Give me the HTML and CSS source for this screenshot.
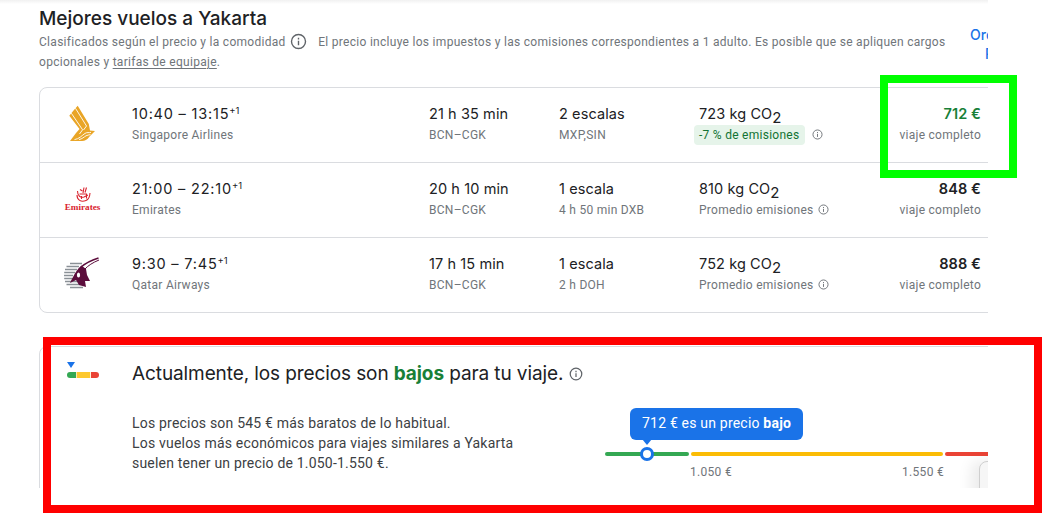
FILE: index.html
```html
<!DOCTYPE html>
<html lang="es">
<head>
  <meta charset="UTF-8" />
  <meta name="viewport" content="width=device-width, initial-scale=1" />
  <title>Mejores vuelos a Yakarta</title>
  <link rel="stylesheet" href="styles.css">
</head>
<body>
  <div class="page">
    <div class="top-shadow"></div>

    <div class="results-head">
      <div class="results-text">
        <h2>Mejores vuelos a Yakarta</h2>
        <div class="results-note">Clasificados según el precio y la comodidad
          <svg class="info info-big" viewBox="0 0 16 16"><circle cx="8" cy="8" r="6.6"/><path d="M8 7.2v4.3M8 4.4v1.6"/></svg>
          El precio incluye los impuestos y las comisiones correspondientes a 1 adulto. Es posible que se apliquen cargos
        </div>
        <div class="results-note">opcionales y <u>tarifas de equipaje</u>.</div>
      </div>
      <a class="sort-link">Ordenar<br>Por</a>
    </div>

    <div class="flights">
      <div class="flight">
        <div class="logo">
          <svg viewBox="0 0 55 50" width="55" height="50">
            <path d="M22.7 5.7 L33.8 24 L35 30.5 L40 31 L34.5 36.5 C32 40 30 41 27 41 L15 41 L21 33 L24.5 29 L14.3 15.7 L18.3 10.7z" fill="#e9a526"/>
            <g fill="none" stroke="#fff" stroke-width="0.9">
              <path d="M20.4 8.2 L31.5 26 L28.5 30"/>
              <path d="M16.3 13.2 L27.6 29.8 L24.5 34"/>
              <path d="M19.5 39.6 C24 39 27 35.5 30 33.4 C32 32 34 33 36 32.4"/>
              <path d="M24 39.6 C27 39 29 37 31 35.8 C32.5 35 34 35 35.5 34.6"/>
            </g>
          </svg>
        </div>
        <div class="col">
          <div class="main times">10:40 – 13:15<sup>+1</sup></div>
          <div class="sub">Singapore Airlines</div>
        </div>
        <div class="col">
          <div class="main">21 h 35 min</div>
          <div class="sub">BCN–CGK</div>
        </div>
        <div class="col">
          <div class="main">2 escalas</div>
          <div class="sub">MXP,SIN</div>
        </div>
        <div class="col">
          <div class="main">723 kg CO<sub>2</sub></div>
          <div class="sub"><span class="pill">-7 % de emisiones</span>
            <svg class="info info-small" viewBox="0 0 16 16"><circle cx="8" cy="8" r="6.6"/><path d="M8 7.2v4.3M8 4.4v1.6"/></svg>
          </div>
        </div>
        <div class="col price">
          <div class="main amount good">712 €</div>
          <div class="sub">viaje completo</div>
        </div>
      </div>

      <div class="flight">
        <div class="logo logo-emirates">
          <svg viewBox="0 0 24 16" width="24" height="16">
            <g fill="none" stroke="#d9232e" stroke-width="1.1">
              <path d="M13 0.5 L12 6 M15.5 0.5 L14 5.5 M6.5 4 C6.5 9 9.5 11 13 10 L17 8 M6 8 C6 13 10 15.5 15 13.5 C18 12.3 18.8 9 19 6"/>
              <path d="M8.5 7 H15.5 V11.5 M9 2.5 L11.5 4 M10.5 9 V12"/>
            </g>
          </svg>
          <span class="emirates-word">Emirates</span>
        </div>
        <div class="col">
          <div class="main times">21:00 – 22:10<sup>+1</sup></div>
          <div class="sub">Emirates</div>
        </div>
        <div class="col">
          <div class="main">20 h 10 min</div>
          <div class="sub">BCN–CGK</div>
        </div>
        <div class="col">
          <div class="main">1 escala</div>
          <div class="sub">4 h 50 min DXB</div>
        </div>
        <div class="col">
          <div class="main">810 kg CO<sub>2</sub></div>
          <div class="sub">Promedio emisiones
            <svg class="info info-small" viewBox="0 0 16 16"><circle cx="8" cy="8" r="6.6"/><path d="M8 7.2v4.3M8 4.4v1.6"/></svg>
          </div>
        </div>
        <div class="col price">
          <div class="main amount">848 €</div>
          <div class="sub">viaje completo</div>
        </div>
      </div>

      <div class="flight">
        <div class="logo">
          <svg viewBox="0 0 55 50" width="55" height="50">
            <g stroke="#8a9096" stroke-width="1.3">
              <path d="M15 13.5H27M11.5 16.5H24M10 19.5H22M9.2 22.5H20M9 25.5H18M9.2 28.5H18M10 31.5H24M11.5 34.5H28M15 37.5H28"/>
            </g>
            <path d="M26.5 15.5 C22 19 19 25 15 33 L21 30 L24 35 L31 37 L30 31 L35 31 L32 25 L31 19z" fill="#5c0d3c"/>
            <g fill="none" stroke="#5c0d3c">
              <path d="M43.5 8 C37 10 31 13 26 17" stroke-width="1.4"/>
              <path d="M44 10 C38 12.5 33 15.5 29.5 19.5" stroke-width="1"/>
            </g>
            <ellipse cx="23.5" cy="25" rx="1.6" ry="2.6" fill="#fff"/>
          </svg>
        </div>
        <div class="col">
          <div class="main times">9:30 – 7:45<sup>+1</sup></div>
          <div class="sub">Qatar Airways</div>
        </div>
        <div class="col">
          <div class="main">17 h 15 min</div>
          <div class="sub">BCN–CGK</div>
        </div>
        <div class="col">
          <div class="main">1 escala</div>
          <div class="sub">2 h DOH</div>
        </div>
        <div class="col">
          <div class="main">752 kg CO<sub>2</sub></div>
          <div class="sub">Promedio emisiones
            <svg class="info info-small" viewBox="0 0 16 16"><circle cx="8" cy="8" r="6.6"/><path d="M8 7.2v4.3M8 4.4v1.6"/></svg>
          </div>
        </div>
        <div class="col price">
          <div class="main amount">888 €</div>
          <div class="sub">viaje completo</div>
        </div>
      </div>
    </div>

    <div class="insight">
      <div class="insight-head">
        <div class="insight-icon">
          <svg viewBox="0 0 33 17" width="33" height="17">
            <path d="M0 0H8L4 6z" fill="#1a73e8"/>
            <path d="M3 10H9V16H3A3 3 0 0 1 3 10z" fill="#34a853"/>
            <rect x="9.6" y="10" width="13.6" height="6" fill="#fdc82f"/>
            <path d="M24 10H29A3 3 0 0 1 29 16H24z" fill="#ea4335"/>
          </svg>
        </div>
        <h3>Actualmente, los precios son <b>bajos</b> para tu viaje.
          <svg class="info info-head" viewBox="0 0 16 16"><circle cx="8" cy="8" r="6.6"/><path d="M8 7.2v4.3M8 4.4v1.6"/></svg>
        </h3>
      </div>
      <div class="insight-body">
        <p class="insight-text">Los precios son 545 € más baratos de lo habitual.<br>Los vuelos más económicos para viajes similares a Yakarta<br>suelen tener un precio de 1.050-1.550 €.</p>
        <div class="range">
          <div class="bubble">712 € es un precio <b>bajo</b></div>
          <div class="track">
            <span class="seg seg-low"></span>
            <span class="seg seg-mid"></span>
            <span class="seg seg-high"></span>
          </div>
          <div class="handle"></div>
          <div class="range-labels">
            <span>1.050 €</span>
            <span>1.550 €</span>
          </div>
        </div>
      </div>
      <div class="corner-widget"></div>
    </div>
  </div>

  <div class="mark mark-green"></div>
  <div class="mark mark-red"></div>
</body>
</html>
```

FILE: styles.css
```css
* {
  box-sizing: border-box;
}

body {
  margin: 0;
  background: #fff;
  font-family: Roboto, 'Liberation Sans', sans-serif;
  color: #202124;
  height: 513px;
  overflow: hidden;
}

.page {
  width: 988px;
  height: 488px;
  overflow: hidden;
  padding-left: 39px;
  position: relative;
}

.top-shadow {
  position: absolute;
  top: 0;
  left: 0;
  right: 0;
  height: 4px;
  background: linear-gradient(to bottom, #f1f1f1, #fff);
}

.results-head {
  display: flex;
  height: 87px;
  padding-top: 7px;
}

.results-text {
  width: 915px;
  flex-shrink: 0;
}

h2 {
  margin: 0 0 1px;
  font-family: Inter, Roboto, sans-serif;
  font-size: 19px;
  font-weight: 500;
  line-height: 24px;
}

.results-note {
  font-size: 12px;
  line-height: 20px;
  letter-spacing: 0.29px;
  color: #70757a;
}

.results-note u {
  text-underline-offset: 2px;
}

.info {
  fill: none;
  stroke: #5f6368;
  vertical-align: middle;
}

.info-big {
  width: 17px;
  height: 17px;
  stroke-width: 1.3;
  margin: -2px 8px 0 1px;
}

.info-small {
  width: 11px;
  height: 11px;
  stroke-width: 1.4;
  margin: -2px 0 0 1px;
  stroke: #70757a;
}

.info-head {
  width: 14px;
  height: 14px;
  stroke-width: 1.4;
  margin-top: -2px;
}

.sort-link {
  margin: 18px 0 0 16px;
  width: 53px;
  flex-shrink: 0;
  text-align: center;
  font-size: 14px;
  line-height: 19px;
  font-family: Inter, Roboto, sans-serif;
  font-weight: 500;
  color: #1a73e8;
}

.flights {
  width: 1000px;
  height: 226px;
  border: 1px solid #dadce0;
  border-radius: 8px;
}

.flight {
  display: grid;
  grid-template-columns: 92px 297px 130px 140px 140px 142px;
  height: 75px;
  border-bottom: 1px solid #dadce0;
  align-items: start;
  padding-top: 16px;
}

.flight:last-child {
  height: 74px;
  border-bottom: 0;
}

.logo {
  display: flex;
  flex-direction: column;
  align-items: center;
  height: 50px;
  margin-top: -4px;
  padding-right: 7px;
}

.logo-emirates {
  padding-top: 12px;
}

.emirates-word {
  font-family: 'Liberation Serif', serif;
  font-weight: 700;
  font-size: 9.2px;
  line-height: 8px;
  color: #d9232e;
}

.main {
  font-family: Inter, Roboto, sans-serif;
  font-size: 14.5px;
  line-height: 20px;
  letter-spacing: 0.1px;
  margin-bottom: 1px;
}

.times {
  letter-spacing: 0.8px;
}

.main sup {
  font-size: 9.5px;
  line-height: 0;
  vertical-align: 5px;
  letter-spacing: 0;
}

.main sub {
  font-size: 15px;
  line-height: 0;
  vertical-align: -4px;
}

.sub {
  font-size: 12px;
  line-height: 20px;
  letter-spacing: 0.27px;
  color: #70757a;
}

.pill {
  display: inline-block;
  margin: 0 2px 0 -5px;
  padding: 0 6px 0 5px;
  background: #e6f4ea;
  color: #137333;
  border-radius: 4px;
}

.price {
  text-align: right;
}

.amount {
  font-weight: 600;
}

.good {
  color: #188038;
}

.insight {
  position: relative;
  width: 1000px;
  height: 170px;
  margin-top: 33px;
  border: 1px solid #dadce0;
  border-radius: 8px;
  padding: 15px 0 0 27px;
}

.insight-head {
  display: flex;
  align-items: flex-start;
}

.insight-icon {
  width: 65px;
  flex-shrink: 0;
}

h3 {
  margin: 0;
  font-family: Inter, Roboto, sans-serif;
  font-size: 19px;
  font-weight: 400;
  line-height: 24px;
  letter-spacing: -0.1px;
}

h3 b {
  font-weight: 700;
  color: #188038;
}

.insight-body {
  display: flex;
  margin-left: 65px;
  margin-top: 17px;
}

.insight-text {
  margin: 10px 0 0;
  width: 473px;
  flex-shrink: 0;
  font-size: 14px;
  line-height: 20px;
  letter-spacing: 0.2px;
  color: #3c4043;
}

.range {
  position: relative;
  width: 400px;
  margin-top: 5px;
  padding-top: 44px;
}

.track {
  display: flex;
  gap: 2px;
  height: 4px;
}

.seg {
  border-radius: 2px;
}

.seg-low {
  width: 84px;
  background: #34a853;
}

.seg-mid {
  width: 252px;
  background: #fbbc04;
}

.seg-high {
  width: 60px;
  background: #ea4335;
}

.bubble {
  position: absolute;
  top: 0;
  left: 25px;
  height: 32px;
  padding: 0 12px;
  border-radius: 6px;
  background: #1a73e8;
  color: #fff;
  font-size: 14px;
  line-height: 30px;
  letter-spacing: 0.2px;
  white-space: nowrap;
}

.bubble::after {
  content: "";
  position: absolute;
  left: 12px;
  top: 31px;
  border: 5px solid transparent;
  border-top: 6px solid #1a73e8;
}

.handle {
  position: absolute;
  top: 39px;
  left: 35px;
  width: 14px;
  height: 14px;
  border: 3px solid #1a73e8;
  border-radius: 50%;
  background: #fff;
}

.range-labels {
  display: flex;
  justify-content: space-between;
  width: 339px;
  padding-left: 85px;
  margin-top: 8px;
  font-size: 12px;
  line-height: 16px;
  letter-spacing: 0.3px;
  color: #70757a;
}

.corner-widget {
  position: absolute;
  left: 939px;
  top: 114px;
  width: 40px;
  height: 60px;
  background: #f6f6f6;
  border: 1px solid #cfcfcf;
  border-radius: 8px 0 0 0;
  box-shadow: -8px 0 14px rgba(0, 0, 0, 0.08);
}

/* annotation boxes drawn over the screenshot */
.mark {
  position: absolute;
  border-style: solid;
  border-width: 8px;
}

.mark-green {
  left: 880px;
  top: 75px;
  width: 137px;
  height: 103px;
  border-color: #00ff00;
}

.mark-red {
  left: 43px;
  top: 337px;
  width: 999px;
  height: 176px;
  border-color: #ff0000;
}
```
